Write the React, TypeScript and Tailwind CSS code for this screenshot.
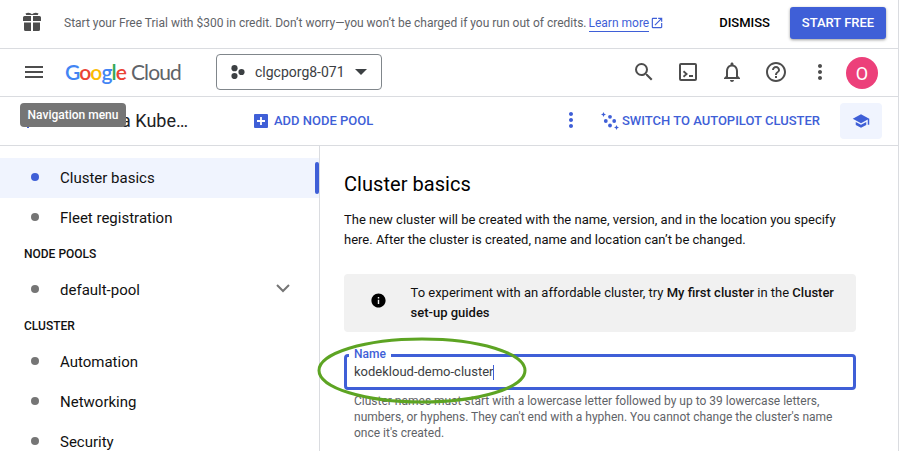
import type { ReactNode } from "react";

const BLUE = "#3f5fd7";

function Icon({ d, size = 24, color = "#4d4d4d", className = "" }: { d: string; size?: number; color?: string; className?: string }) {
  return (
    <svg width={size} height={size} viewBox="0 0 24 24" fill={color} className={`shrink-0 ${className}`}>
      <path d={d} />
    </svg>
  );
}

const paths = {
  menu: "M3 18h18v-2H3v2zm0-5h18v-2H3v2zm0-7v2h18V6H3z",
  search:
    "M15.5 14h-.79l-.28-.27A6.471 6.471 0 0 0 16 9.5 6.5 6.5 0 1 0 9.5 16c1.61 0 3.09-.59 4.23-1.57l.27.28v.79l5 4.99L20.49 19l-4.99-5zm-6 0C7.01 14 5 11.99 5 9.5S7.01 5 9.5 5 14 7.01 14 9.5 11.99 14 9.5 14z",
  bell: "M12 22c1.1 0 2-.9 2-2h-4c0 1.1.9 2 2 2zm6-6v-5c0-3.07-1.63-5.64-4.5-6.32V4c0-.83-.67-1.5-1.5-1.5s-1.5.67-1.5 1.5v.68C7.64 5.36 6 7.92 6 11v5l-2 2v1h16v-1l-2-2zm-2 1H8v-6c0-2.48 1.51-4.5 4-4.5s4 2.02 4 4.5v6z",
  help: "M11 18h2v-2h-2v2zm1-16C6.48 2 2 6.48 2 12s4.480 10 10 10 10-4.480 10-10S17.520 2 12 2zm0 18c-4.410 0-8-3.590-8-8s3.590-8 8-8 8 3.590 8 8-3.590 8-8 8zm0-14c-2.210 0-4 1.790-4 4h2c0-1.100.9-2 2-2s2 .9 2 2c0 2-3 1.750-3 5h2c0-2.250 3-2.500 3-5 0-2.210-1.790-4-4-4z",
  more: "M12 8c1.100 0 2-.9 2-2s-.9-2-2-2-2 .9-2 2 .9 2 2 2zm0 2c-1.100 0-2 .9-2 2s.9 2 2 2 2-.9 2-2-.9-2-2-2zm0 6c-1.100 0-2 .9-2 2s.9 2 2 2 2-.9 2-2-.9-2-2-2z",
  school: "M5 13.180v4L12 21l7-3.820v-4L12 17l-7-3.820zM12 3 1 9l11 6 9-4.910V17h2V9L12 3z",
  open: "M19 19H5V5h7V3H5a2 2 0 0 0-2 2v14a2 2 0 0 0 2 2h14c1.100 0 2-.9 2-2v-7h-2v7zM14 3v2h3.590l-9.830 9.830 1.410 1.410L19 6.410V10h2V3h-7z",
  info: "M12 2C6.480 2 2 6.480 2 12s4.480 10 10 10 10-4.480 10-10S17.520 2 12 2zm1 15h-2v-6h2v6zm0-8h-2V7h2v2z",
};

function Banner() {
  return (
    <div className="flex h-[49px] shrink-0 items-center border-b border-[#dadce0] pl-[23px] pr-3">
      <svg width="18" height="20" viewBox="0 0 18 20" fill="#4d4d4d" className="mt-[-4px] shrink-0">
        <path d="M2.500 1.500 Q5 .2 7.500 1.200 L9 2.200 10.500 1.200 Q13 .2 15.500 1.500 L14.800 3 H3.200Z" />
        <path d="M1.500 4H8v5H0V5.500Q0 4 1.500 4zM10 4h6.500Q18 4 18 5.500V9h-8z" />
        <path d="M1 10.500h7V19H2.500Q1 19 1 17.500zM10 10.500h7v7Q17 19 15.500 19H10z" />
      </svg>
      <p className="ml-[23px] mt-[-2px] whitespace-nowrap text-[12px] text-[#5f6368]">
        Start your Free Trial with $300 in credit. Don’t worry—you won’t be charged if you run out of credits.
      </p>
      <a className="ml-[2px] mt-[-2px] flex h-[17px] items-center whitespace-nowrap border-b border-[#3f5fd7] text-[12px] text-[#3f5fd7]">Learn more</a>
      <Icon d={paths.open} size={14} color={BLUE} className="ml-[1px] mt-[-2px]" />
      <button className="ml-auto mt-[-2px] text-[13px] font-medium text-black">DISMISS</button>
      <button className="ml-5 mt-[-2px] h-8 w-24 rounded-[3px] bg-[#3f5fd7] text-[13px] font-medium text-white shadow-[0_1px_3px_rgba(0,0,0,0.4)]">
        START FREE
      </button>
    </div>
  );
}

function Logo() {
  return (
    <div className="ml-[19px] flex w-[118px] shrink-0 items-baseline whitespace-nowrap font-['Lato',sans-serif] text-[21px] leading-[28px]">
      <span className="font-semibold tracking-[-0.9px]">
        <span className="text-[#4285f4]">G</span>
        <span className="text-[#ea4335]">o</span>
        <span className="text-[#fbbc04]">o</span>
        <span className="text-[#4285f4]">g</span>
        <span className="text-[#34a853]">l</span>
        <span className="text-[#ea4335]">e</span>
      </span>
      <span className="ml-[5px] tracking-[-0.9px] text-[#5f6368]">Cloud</span>
    </div>
  );
}

function TopBar() {
  return (
    <div className="flex h-12 shrink-0 items-center border-b border-[#dadce0] pb-px pl-[22px] pr-5">
      <Icon d={paths.menu} />
      <Logo />
      <button className="ml-[33px] flex h-9 w-[166px] items-center rounded border border-[#80868b] pl-[14px] text-[#3c4043]">
        <svg width="14" height="14" viewBox="0 0 14 14" fill="#3c4043">
          <circle cx="3.500" cy="3.200" r="3.100" />
          <circle cx="10.500" cy="7" r="3.100" />
          <circle cx="3.500" cy="11" r="3.100" />
        </svg>
        <span className="ml-[10px] text-[14px]">clgcporg8-071</span>
        <svg width="12" height="6" viewBox="0 0 12 6" fill="#3c4043" className="ml-[10px]">
          <path d="M0 0h12L6 6z" />
        </svg>
      </button>
      <div className="ml-auto flex items-center">
        <Icon d={paths.search} />
        <svg width="18" height="18" viewBox="0 0 18 18" fill="none" stroke="#4d4d4d" strokeWidth="2" className="ml-[23px]">
          <rect x="1" y="1" width="16" height="16" rx="1" />
          <path d="M4.500 8.300 7.600 11 4.500 13.700M10 13H14" strokeWidth="1.800" />
        </svg>
        <Icon d={paths.bell} className="ml-[23px]" />
        <Icon d={paths.help} className="ml-5" />
        <Icon d={paths.more} className="ml-5" />
        <div className="ml-[14px] mt-[2px] flex size-8 items-center justify-center rounded-full bg-[#ec407a] text-[18px] text-white">O</div>
      </div>
    </div>
  );
}

function ActionBar() {
  return (
    <div className="relative flex h-[49px] shrink-0 items-center border-b border-[#dadce0] pl-5 pr-4 text-[13px] font-medium text-[#3f5fd7]">
      <h1 className="mt-[-2px] w-[168px] whitespace-nowrap text-right text-[18px] font-normal text-[#202124]">a Kube…</h1>
      <span className="absolute left-[27px] top-[29px] h-[2px] w-[2px] bg-[#3f5fd7]" />
      <div className="absolute left-5 top-[6px] flex h-6 w-[106px] items-center justify-center rounded bg-[#757575] text-[12px] font-medium text-white">
        Navigation menu
      </div>
      <svg width="14" height="14" viewBox="0 0 14 14" className="ml-[66px] shrink-0">
        <rect width="14" height="14" rx="1" fill={BLUE} />
        <path d="M7 3v8M3 7h8" stroke="white" strokeWidth="1.800" />
      </svg>
      <span className="ml-[6px] whitespace-nowrap">ADD NODE POOL</span>
      <div className="ml-auto flex items-center">
        <Icon d={paths.more} color={BLUE} className="mt-[-2px]" />
        <svg width="18" height="18" viewBox="0 0 18 18" fill={BLUE} className="ml-[18px]">
          <circle cx="9" cy="4.800" r="1.900" />
          <circle cx="4.800" cy="9" r="1.900" />
          <circle cx="13.200" cy="9" r="1.900" />
          <circle cx="9" cy="13.500" r="1.900" />
          <path d="m2.500 0 .8 1.700 1.700.8-1.700.8-.8 1.700-.8-1.700L0 2.500l1.700-.8zM15.500 13l.8 1.700 1.700.8-1.700.8-.8 1.700-.8-1.700-1.700-.8 1.700-.8z" />
        </svg>
        <span className="ml-[3px] whitespace-nowrap">SWITCH TO AUTOPILOT CLUSTER</span>
        <div className="ml-5 flex h-9 w-[42px] items-center justify-center rounded bg-[#f0f4fe]">
          <Icon d={paths.school} size={18} color={BLUE} />
        </div>
      </div>
    </div>
  );
}

function NavItem({ children, active = false, chevron = false }: { children: ReactNode; active?: boolean; chevron?: boolean }) {
  return (
    <div className={`flex h-10 shrink-0 items-center pl-[31px] ${active ? "bg-[#f0f4fe]" : ""}`}>
      <span className={`mt-[-2px] size-2 rounded-full ${active ? "bg-[#3f5fd7]" : "bg-[#757575]"}`} />
      <span className="ml-[21px] text-[15px] text-[#111]">{children}</span>
      {active && <span className="ml-auto h-8 w-1 rounded-[2px] bg-[#3f5fd7]" />}
      {chevron && (
        <svg width="14" height="9" viewBox="0 0 14 9" fill="none" stroke="#757575" strokeWidth="2" className="ml-auto mr-[29px] mt-[-3px]">
          <path d="m1 1 6 6 6-6" />
        </svg>
      )}
    </div>
  );
}

function NavHeading({ children }: { children: ReactNode }) {
  return <div className="flex h-8 shrink-0 items-center pl-6 text-[12px] font-medium text-[#111]">{children}</div>;
}

function Sidebar() {
  return (
    <nav className="flex w-80 shrink-0 flex-col overflow-hidden border-r border-[#dadce0] pt-3">
      <NavItem active>Cluster basics</NavItem>
      <NavItem>Fleet registration</NavItem>
      <NavHeading>NODE POOLS</NavHeading>
      <NavItem chevron>default-pool</NavItem>
      <NavHeading>CLUSTER</NavHeading>
      <NavItem>Automation</NavItem>
      <NavItem>Networking</NavItem>
      <NavItem>Security</NavItem>
    </nav>
  );
}

function Content() {
  return (
    <main className="flex-1 pl-6 pt-[26px] text-[13px] leading-5 text-[#111]">
      <h2 className="text-[20px] leading-6 tracking-[0.05px] text-black">Cluster basics</h2>
      <p className="mt-[14px] whitespace-nowrap">
        The new cluster will be created with the name, version, and in the location you specify
        <br />
        here. After the cluster is created, name and location can’t be changed.
      </p>
      <div className="mt-6 flex h-[58px] w-[512px] items-center rounded bg-[#f1f1f1] pl-[25.500px]">
        <Icon d={paths.info} size={17} color="#000" className="mt-[-6px]" />
        <p className="ml-6 whitespace-nowrap">
          To experiment with an affordable cluster, try <b className="font-medium">My first cluster</b> in the <b className="font-medium">Cluster</b>
          <br />
          <b className="font-medium">set-up guides</b>
        </p>
      </div>
      <div className="relative mt-[22px] flex h-9 w-[512px] items-center rounded-[4px] border-[3px] border-[#3f5fd7] pl-[7px]">
        <label className="absolute left-[2px] top-[-11px] bg-white px-[5px] text-[12px] font-medium leading-4 text-[#3f5fd7]">Name</label>
        <span className="text-[#3c4043]">kodekloud-demo-cluster</span>
        <span className="ml-[-1px] h-[15px] w-px bg-[#3f5fd7]" />
        <svg width="210" height="70" viewBox="0 0 210 70" fill="none" className="absolute left-[-30px] top-[-21px]">
          <ellipse cx="105" cy="34.500" rx="103" ry="31.500" stroke="#5da423" strokeWidth="3" />
        </svg>
      </div>
      <p className="ml-[10px] mt-[3px] whitespace-nowrap text-[12px] leading-4 text-[#5f6368]">
        Cluster names must start with a lowercase letter followed by up to 39 lowercase letters,
        <br />
        numbers, or hyphens. They can't end with a hyphen. You cannot change the cluster's name
        <br />
        once it's created.
      </p>
    </main>
  );
}

export default function App() {
  return (
    <div className="flex h-[451px] w-[899px] flex-col overflow-hidden border-r border-[#dadce0] bg-white font-['Roboto',sans-serif]">
      <Banner />
      <TopBar />
      <ActionBar />
      <div className="flex min-h-0 flex-1">
        <Sidebar />
        <Content />
      </div>
    </div>
  );
}
